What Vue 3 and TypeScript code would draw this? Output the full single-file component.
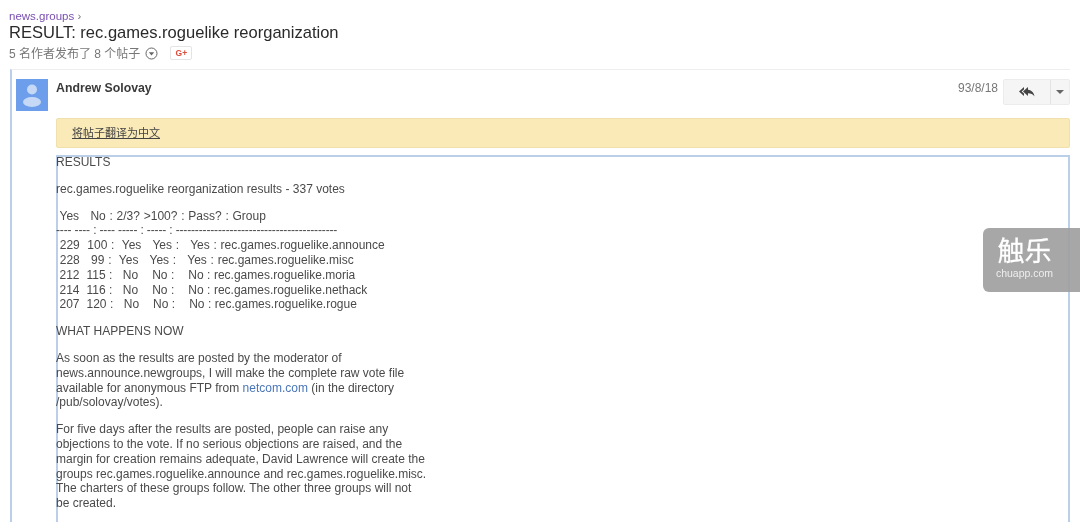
<script setup lang="ts">
const header = ' Yes   No : 2/3? >100? : Pass? : Group'
const rows: string[] = [
  ' 229  100 :  Yes   Yes :   Yes : rec.games.roguelike.announce',
  ' 228   99 :  Yes   Yes :   Yes : rec.games.roguelike.misc',
  ' 212  115 :   No    No :    No : rec.games.roguelike.moria',
  ' 214  116 :   No    No :    No : rec.games.roguelike.nethack',
  ' 207  120 :   No    No :    No : rec.games.roguelike.rogue',
]
</script>

<template>
  <div class="page">
    <header class="head">
      <div class="crumb"><span class="crumb-link">news.groups</span> <span class="crumb-sep">›</span></div>
      <h1 class="title">RESULT: rec.games.roguelike reorganization</h1>
      <div class="meta">
        <span>5 名作者发布了 8 个帖子</span>
        <svg class="chev" width="13" height="13" viewBox="0 0 13 13">
          <circle cx="6.5" cy="6.5" r="5.5" fill="none" stroke="#666" stroke-width="1" />
          <path d="M3.8 5.2h5.4L6.5 8.4z" fill="#666" />
        </svg>
        <span class="gplus">G+</span>
      </div>
    </header>

    <section class="thread">
      <div class="post-head">
        <svg class="avatar" width="32" height="32" viewBox="0 0 32 32">
          <rect width="32" height="32" fill="#6d9eeb" />
          <circle cx="16" cy="10.5" r="5" fill="#c5d8f5" />
          <ellipse cx="16" cy="23" rx="9" ry="5" fill="#c5d8f5" />
        </svg>
        <div class="author">Andrew Solovay</div>
        <div class="date">93/8/18</div>
        <div class="btns">
          <div class="btn reply">
            <svg width="18" height="12" viewBox="0 0 18 12">
              <path d="M6 1 1 5.5 6 10V7.6L3.6 5.5 6 3.4z" fill="#444" />
              <path d="M10 1 5 5.5l5 4.5V7.2c3 0 5 .9 6.5 3.3C16 7 14 4.3 10 3.8z" fill="#444" />
            </svg>
          </div>
          <div class="btn more"><span class="caret"></span></div>
        </div>
      </div>

      <div class="translate"><span class="translate-link">将帖子翻译为中文</span></div>

      <div class="body">
        <p>RESULTS</p>
        <p>rec.games.roguelike reorganization results - 337 votes</p>
        <div class="table">
          <div class="tr">{{ header }}</div>
          <div class="tr dash">---- ---- : ---- ----- : ----- : ------------------------------------------</div>
          <div v-for="r in rows" :key="r" class="tr" :class="{ 'tr-no': r.includes('No') }">{{ r }}</div>
        </div>
        <p>WHAT HAPPENS NOW</p>
        <p>As soon as the results are posted by the moderator of<br />news.announce.newgroups, I will make the complete raw vote file<br />available for anonymous FTP from <span class="link">netcom.com</span> (in the directory<br />/pub/solovay/votes).</p>
        <p>For five days after the results are posted, people can raise any<br />objections to the vote. If no serious objections are raised, and the<br />margin for creation remains adequate, David Lawrence will create the<br />groups rec.games.roguelike.announce and rec.games.roguelike.misc.<br />The charters of these groups follow. The other three groups will not<br />be created.</p>
      </div>
    </section>

    <div class="mark">
      <div class="mark-cn">触乐</div>
      <div class="mark-en">chuapp.com</div>
    </div>
  </div>
</template>

<style>
html, body { margin: 0; background: #fff; overflow: hidden; }
</style>

<style scoped>
.page {
  position: relative;
  width: 1080px;
  height: 522px;
  overflow: hidden;
  background: #fff;
  font-family: "Liberation Sans", "Noto Sans CJK SC", sans-serif;
  color: #333;
  font-size: 12px;
  filter: blur(0.4px);
}
.head { padding: 9px 0 0 9px; height: 60px; }
.crumb { font-size: 11.5px; line-height: 14px; }
.crumb-link { color: #7a4fb0; }
.crumb-sep { color: #777; }
.title { margin: 0; font-size: 16.55px; font-weight: 400; line-height: 20px; color: #2a2a2a; }
.meta { display: flex; align-items: center; margin-top: 3px; line-height: 16px; font-size: 12px; color: #777; height: 16px; }
.chev { margin: -2px 0 0 5px; }
.gplus { margin: -2px 0 0 12px; width: 20px; height: 12px; line-height: 12px; border: 1px solid #e4e4e4; border-radius: 2px; text-align: center; font-size: 8.5px; font-weight: 700; color: #dd4b39; }
.thread { margin-left: 10px; border-left: 2px solid #bccfe9; border-top: 1px solid #eee; height: 453px; width: 1060px; padding: 9px 0 0 4px; box-sizing: border-box; }
.post-head { display: flex; align-items: flex-start; height: 39px; }
.avatar { flex: none; }
.author { margin-left: 8px; margin-top: 1px; font-size: 12.3px; line-height: 16px; font-weight: 700; color: #3a3a3a; flex: 1; }
.date { margin-top: 1px; line-height: 16px; font-size: 12px; color: #777; margin-right: 5px; }
.btns { display: flex; height: 26px; width: 67px; background: #f5f5f5; border: 1px solid #ececec; border-radius: 2px; box-sizing: border-box; }
.btn { display: flex; align-items: center; justify-content: center; }
.reply { width: 46px; border-right: 1px solid #e2e2e2; }
.more { flex: 1; }
.caret { width: 0; height: 0; border-left: 4px solid transparent; border-right: 4px solid transparent; border-top: 4px solid #666; }
.translate { margin-left: 40px; height: 30px; line-height: 29px; box-sizing: border-box; background: #f9eab8; border: 1px solid #efe0ae; border-radius: 2px; padding-left: 15px; width: 1014px; }
.translate-link { text-decoration: underline; color: #444; font-size: 11px; }
.body { margin: 7px 0 0 40px; width: 1014px; height: 372px; box-sizing: border-box; border: 2px solid #bccfe9; border-bottom: none; line-height: 14.8px; font-size: 12px; color: #4a4a4a; }
.body p { margin: 0 0 12px -2px; }
.body p:first-child { margin-top: -2px; }
.table { margin: 0 0 12px -2px; }
.tr { white-space: pre; word-spacing: 0.43px; }
.tr-no { word-spacing: 0.15px; }
.dash { letter-spacing: -0.15px; word-spacing: 0; }
.link { color: #4a76b8; }
.mark {
  position: absolute;
  left: 983px;
  top: 228px;
  width: 97px;
  height: 64px;
  background: rgba(160, 160, 160, 0.92);
  border-radius: 6px 0 0 6px;
  color: #fff;
  text-align: center;
}
.mark-cn { margin-top: 9px; margin-left: -14px; font-size: 27px; font-weight: 400; -webkit-text-stroke: 0.3px #fff; line-height: 30px; }
.mark-en { margin-left: -14px; font-size: 10.5px; line-height: 13px; color: #eee; }
</style>
